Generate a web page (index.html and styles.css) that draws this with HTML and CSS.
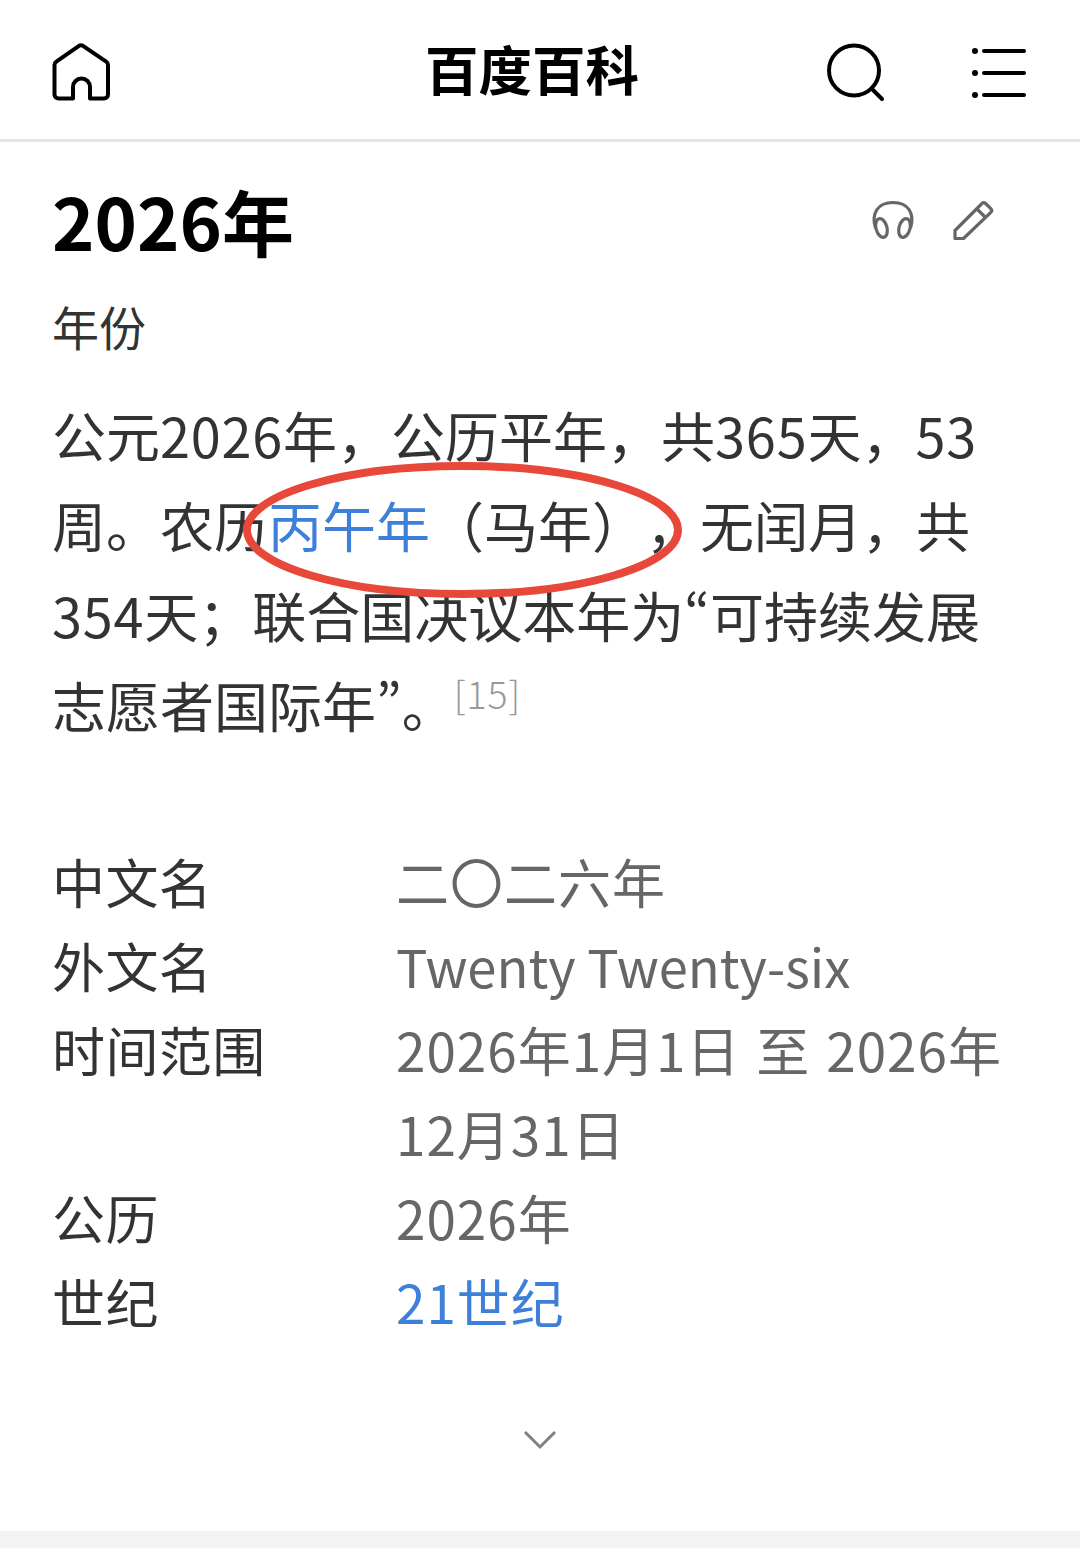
FILE: index.html
```html
<!DOCTYPE html>
<html lang="zh">
<head>
  <meta charset="utf-8">
  <title>2026年 百度百科</title>
  <link rel="stylesheet" href="styles.css">
</head>
<body>
  <header class="topbar">
    <svg class="icon-home" viewBox="50 42 64 64" fill="none" stroke="#000" stroke-width="4" stroke-linejoin="round">
      <path d="M73 99.5V88a8.5 8.5 0 0 1 17 0V99.5H104a4 4 0 0 0 4-4V66a4 4 0 0 0-1.8-3.3L83 46.8a4 4 0 0 0-4 0L56.3 62.7a4 4 0 0 0-1.8 3.3V95.5a4 4 0 0 0 4 4Z"/>
    </svg>
    <div class="brand">百度百科</div>
    <svg class="icon-search" viewBox="824 42 64 64" fill="none" stroke="#000" stroke-width="4" stroke-linecap="round">
      <circle cx="854" cy="71.5" r="25"/>
      <path d="M873 91L882 100"/>
    </svg>
    <svg class="icon-menu" viewBox="968 42 60 60" fill="none" stroke="#000" stroke-width="4" stroke-linecap="round">
      <path d="M984 51H1024M984 73H1024M984 95H1024"/>
      <circle cx="975" cy="51" r="3" fill="#000" stroke="none"/>
      <circle cx="975" cy="73" r="3" fill="#000" stroke="none"/>
      <circle cx="975" cy="95" r="3" fill="#000" stroke="none"/>
    </svg>
  </header>

  <main class="content">
    <div class="title-row">
      <h1 class="title">2026年</h1>
      <div class="title-tools">
        <svg class="tool" viewBox="868 198 50 46" fill="none" stroke="#666" stroke-width="3.2">
          <path d="M875.5 229C871 214 878 203.5 893 203.5S915 214 910.5 229"/>
          <ellipse cx="881.5" cy="229" rx="5.5" ry="9.5" transform="rotate(-15 881.5 229)"/>
          <ellipse cx="904.5" cy="229" rx="5.5" ry="9.5" transform="rotate(15 904.5 229)"/>
        </svg>
        <svg class="tool" viewBox="948 198 50 46" fill="none" stroke="#666" stroke-width="3.2" stroke-linejoin="round">
          <path d="M955 239.5V231.5L982 204.5q1.800-1.800 3.600 0L990.800 209.700q1.800 1.800 0 3.600L963.500 239.500Z"/>
          <path d="M976.500 209.500L986 219"/>
        </svg>
      </div>
    </div>
    <div class="subtitle">年份</div>

    <p class="summary">公元<span class="num">2026</span>年，公历平年，共<span class="num">365</span>天，<span class="num">53</span>周。农历<a class="link">丙午年</a>（马年），无闰月，共<span class="num">354</span>天；联合国决议本年为<span class="quote">“</span>可持续发展志愿者国际年<span class="quote">”</span>。<sup class="ref">[15]</sup></p>

    <dl class="info">
      <dt>中文名</dt><dd>二〇二六年</dd>
      <dt>外文名</dt><dd class="latin">Twenty Twenty-six</dd>
      <dt>时间范围</dt><dd>2026年1月1日 至 2026年12月31日</dd>
      <dt>公历</dt><dd>2026年</dd>
      <dt>世纪</dt><dd><a class="link">21世纪</a></dd>
    </dl>

    <div class="more">
      <svg class="icon-more" viewBox="0 0 34 20" fill="none" stroke="#808080" stroke-width="3">
        <path d="M2 2L17 17L32 2"/>
      </svg>
    </div>
  </main>

  <div class="footer-band"></div>

  <svg class="markup" viewBox="0 0 1080 1548" fill="none">
    <ellipse cx="462.500" cy="530" rx="215.500" ry="64" stroke="#e8483a" stroke-width="8"/>
  </svg>
</body>
</html>
```

FILE: styles.css
```css
html, body {
  margin: 0;
  height: 1548px;
  overflow: hidden;
  background: #fff;
}
body {
  position: relative;
  display: flex;
  flex-direction: column;
  font-family: "Noto Sans CJK SC", "Noto Sans", sans-serif;
  color: #333;
  text-spacing-trim: space-all;
}
svg {
  display: block;
}

.topbar {
  display: flex;
  align-items: center;
  height: 139px;
  padding-left: 50px;
  border-bottom: 3px solid #e6e6e6;
  flex-shrink: 0;
}
.icon-home {
  width: 64px;
  height: 64px;
  margin-top: 6px;
}
.brand {
  margin-left: 311px;
  width: 213px;
  font-size: 53.5px;
  font-weight: 700;
  line-height: 64px;
  color: #000;
  white-space: nowrap;
  margin-bottom: 4px;
}
.icon-search {
  width: 64px;
  height: 64px;
  margin-left: 186px;
  margin-top: 6px;
}
.icon-menu {
  width: 60px;
  height: 60px;
  margin-left: 80px;
  margin-top: 4px;
}

.content {
  flex: 1;
  padding: 0 52px;
}
.title-row {
  display: flex;
  justify-content: space-between;
  align-items: center;
  padding-top: 32px;
}
.title {
  margin: 0;
  font-size: 72px;
  font-weight: 700;
  line-height: 92px;
  color: #000;
}
.title-tools {
  display: flex;
  gap: 30px;
  margin-right: 30px;
}
.tool {
  width: 50px;
  height: 46px;
}
.subtitle {
  margin-top: 30px;
  font-size: 47px;
  line-height: 60px;
}
.summary {
  margin: 34px 0 0;
  width: 935px;
  font-size: 54px;
  line-height: 90px;
}
.num {
  letter-spacing: .8px;
}
.quote {
  font-feature-settings: "pwid";
}
.ref {
  position: relative;
  top: -19px;
  font-size: 37.5px;
  font-weight: 300;
  line-height: 0;
  color: #999;
  letter-spacing: 1px;
  margin-left: -2px;
  vertical-align: baseline;
}
.link {
  color: #3d7fd9;
}

.info {
  display: grid;
  grid-template-columns: 344px 1fr;
  margin: 89px 0 0;
  font-size: 53px;
  line-height: 84px;
}
.info dt {
  color: #333;
  letter-spacing: .4px;
}
.info dd {
  margin: 0;
  color: #666;
  letter-spacing: 1px;
  word-spacing: 3px;
}
.info .latin {
  font-size: 52.5px;
  letter-spacing: 0;
  word-spacing: 0;
}
.more {
  display: flex;
  justify-content: center;
  margin-top: 87px;
}
.icon-more {
  width: 34px;
  height: 20px;
}

.footer-band {
  height: 17px;
  background: #f3f3f3;
  flex-shrink: 0;
}

.markup {
  position: absolute;
  top: 0;
  left: 0;
  width: 1080px;
  height: 1548px;
  pointer-events: none;
}
```
